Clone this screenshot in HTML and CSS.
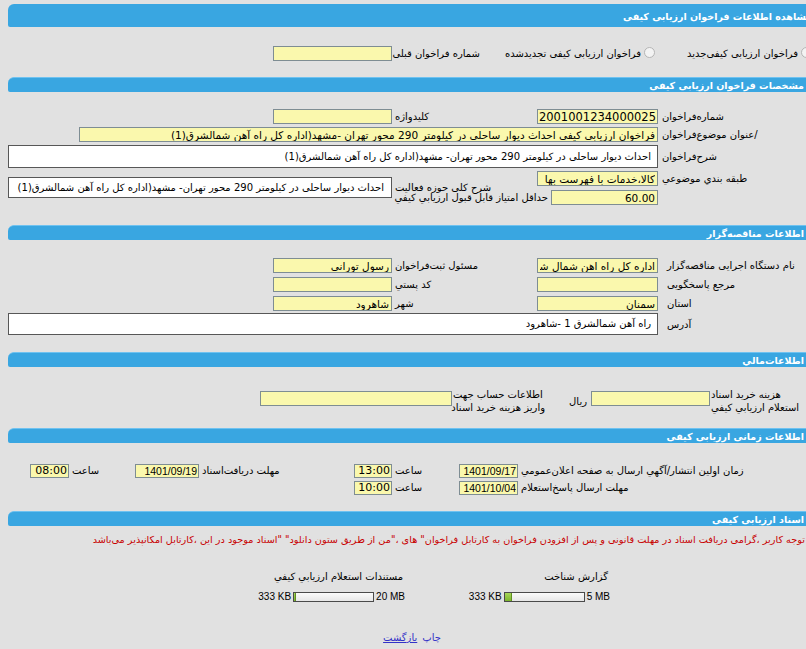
FILE: index.html
```html
<!DOCTYPE html>
<html lang="fa">
<head>
    <meta charset="UTF-8">
    <meta name="viewport" content="width=device-width, initial-scale=1.0">
    <title>مشاهده اطلاعات فراخوان ارزیابی کیفی</title>
    <link rel="stylesheet" href="styles.css">
</head>
<body>
<div class="page" dir="rtl">

    <section class="panel">
        <h2 class="panel-title main">مشاهده اطلاعات فراخوان ارزیابی کیفی</h2>
        <div class="panel-body kind-row">
            <label class="choice first"><input type="radio" name="kind"><span>فراخوان ارزیابی کیفی‌جدید</span></label>
            <label class="choice second"><input type="radio" name="kind"><span>فراخوان ارزیابی کیفی تجدیدشده</span></label>
            <span class="lbl prev-label">شماره فراخوان قبلی</span>
            <input class="field" type="text" value="">
        </div>
    </section>

    <section class="panel">
        <h2 class="panel-title">مشخصات فراخوان ارزیابی کیفی</h2>
        <div class="panel-body form-grid spec">
            <span class="lbl">شماره‌فراخوان</span>
            <input class="field num" type="text" value="2001001234000025">
            <span class="lbl side">کلیدواژه</span>
            <input class="field" type="text" value="">

            <span class="lbl">/عنوان موضوع‌فراخوان</span>
            <input class="field title-field" type="text" value="فراخوان ارزیابی کیفی احداث دیوار ساحلی در کیلومتر 290 محور تهران -مشهد(اداره کل راه آهن شمالشرق(1)">

            <span class="lbl">شرح‌فراخوان</span>
            <div class="memo full">احداث دیوار ساحلی در کیلومتر 290 محور تهران- مشهد(اداره کل راه آهن شمالشرق(1)</div>

            <span class="lbl">طبقه بندي موضوعي</span>
            <input class="field" type="text" value="کالا،خدمات با فهرست بها">
            <span class="lbl side activity-label">شرح کلی حوزه فعالیت</span>
            <div class="memo activity">احداث دیوار ساحلی در کیلومتر 290 محور تهران- مشهد(اداره کل راه آهن شمالشرق(1)</div>

            <div class="min-score">
                <input class="field short" type="text" value="60.00">
                <span class="lbl">حداقل امتیاز قابل قبول ارزیابي کیفي</span>
            </div>
        </div>
    </section>

    <section class="panel">
        <h2 class="panel-title">اطلاعات مناقصه‌گزار</h2>
        <div class="panel-body form-grid owner">
            <span class="lbl">نام دستگاه اجرایی مناقصه‌گزار</span>
            <input class="field" type="text" value="اداره کل راه اهن شمال شرق">
            <span class="lbl side">مسئول ثبت‌فراخوان</span>
            <input class="field" type="text" value="رسول تورانی">

            <span class="lbl">مرجع پاسخگویی</span>
            <input class="field" type="text" value="">
            <span class="lbl side">کد پستي</span>
            <input class="field" type="text" value="">

            <span class="lbl">استان</span>
            <input class="field" type="text" value="سمنان">
            <span class="lbl side">شهر</span>
            <input class="field" type="text" value="شاهرود">

            <span class="lbl address-label">آدرس</span>
            <div class="memo full address">راه آهن شمالشرق 1 -شاهرود</div>
        </div>
    </section>

    <section class="panel">
        <h2 class="panel-title">اطلاعات‌مالي</h2>
        <div class="panel-body money-row">
            <span class="lbl two-line fee-label">هزینه خرید اسناد<br>استعلام ارزیابي کیفي</span>
            <input class="field fee" type="text" value="">
            <span class="lbl currency">ریال</span>
            <span class="lbl two-line account-label">اطلاعات حساب جهت<br>واریز هزینه خرید اسناد</span>
            <input class="field account" type="text" value="">
        </div>
    </section>

    <section class="panel">
        <h2 class="panel-title">اطلاعات زمانی ارزیابی کیفی</h2>
        <div class="panel-body dates">
            <div class="date-row">
                <span class="lbl c-main">زمان اولین انتشار/آگهي ارسال به صفحه اعلان‌عمومي</span>
                <input class="field date" type="text" value="1401/09/17">
                <span class="lbl c-hour">ساعت</span>
                <input class="field hour" type="text" value="13:00">
                <span class="lbl c-mid">مهلت دریافت‌اسناد</span>
                <input class="field date wide" type="text" value="1401/09/19">
                <span class="lbl c-hour last">ساعت</span>
                <input class="field hour last" type="text" value="08:00">
            </div>
            <div class="date-row">
                <span class="lbl c-main">مهلت ارسال پاسخ‌استعلام</span>
                <input class="field date" type="text" value="1401/10/04">
                <span class="lbl c-hour">ساعت</span>
                <input class="field hour" type="text" value="10:00">
            </div>
        </div>
    </section>

    <section class="panel">
        <h2 class="panel-title">اسناد ارزیابی کیفی</h2>
        <div class="panel-body docs">
            <p class="notice">توجه کاربر ،گرامی دریافت اسناد در مهلت قانونی و پس از افزودن فراخوان به کارتابل فراخوان" های ،"من از طریق ستون دانلود" "اسناد موجود در این ،کارتابل امکانپذیر می‌باشد</p>

            <div class="files">
                <div class="file">
                    <span class="file-name">گزارش شناخت</span>
                    <span class="meter" dir="ltr">333 KB<span class="bar"><span class="bar-fill" style="width: 9%"></span></span>5 MB</span>
                </div>
                <div class="file">
                    <span class="file-name">مستندات استعلام ارزیابي کیفي</span>
                    <span class="meter" dir="ltr">333 KB<span class="bar"><span class="bar-fill" style="width: 3%"></span></span>20 MB</span>
                </div>
            </div>

            <div class="actions">
                <a href="#" class="print">چاپ</a>
                <a href="#" class="back">بازگشت</a>
            </div>
        </div>
    </section>

</div>
</body>
</html>
```

FILE: styles.css
```css
* {
    box-sizing: border-box;
    margin: 0;
    padding: 0;
}

body {
    background-color: #e1e1e1;
    font-family: "DejaVu Sans", Tahoma, sans-serif;
    font-size: 10px;
    color: #000;
    overflow: hidden;
}

.page {
    width: 808px;
    margin-left: 8px;
    padding-top: 4px;
}

/* section headers */
.panel-title {
    height: 15px;
    padding-right: 12px;
    background-color: #39a6e1;
    border-top: 1px solid #6fc2f0;
    border-radius: 6px 0 0 2px;
    color: #fff;
    font-size: 9.5px;
    font-weight: bold;
    line-height: 16px;
    white-space: nowrap;
}

.panel-title.main {
    height: 23px;
    padding-right: 4px;
    border-top: none;
    line-height: 26px;
}

/* common controls */
.lbl {
    white-space: nowrap;
    line-height: 15px;
}

.field {
    height: 15px;
    width: 121px;
    padding: 0 2px;
    background-color: #faf8ad;
    border: 1px solid #7e8d93;
    font-family: inherit;
    font-size: 10.5px;
    color: #000;
    text-align: right;
    outline: none;
}

.field.num {
    font-size: 11.5px;
    padding: 0 1px;
}

.memo {
    height: 23px;
    padding: 0 6px;
    background-color: #fff;
    border: 1px solid #575757;
    line-height: 21px;
    white-space: nowrap;
    overflow: hidden;
}

/* section 1 */
.kind-row {
    display: flex;
    align-items: center;
    height: 50px;
    padding-top: 3px;
}

.choice {
    display: flex;
    align-items: center;
}

.choice input {
    appearance: none;
    width: 11px;
    height: 11px;
    margin-top: -2px;
    border: 1px solid #b5b5b5;
    border-radius: 50%;
    background-color: #f3f3f3;
}

.choice span {
    margin-right: 3px;
}

.choice.first {
    width: 156px;
}

.choice.first input {
    margin-right: 4px;
}

.choice.second {
    width: 180px;
}

.choice.second input {
    margin-right: 5px;
}

.prev-label {
    width: 88px;
    padding-left: 3px;
    text-align: left;
}

.kind-row .field {
    width: 119px;
}

/* label / field grids */
.form-grid {
    display: grid;
    grid-template-columns: 158px 121px 145px 384px;
    grid-auto-rows: 15px;
    align-items: center;
}

.form-grid .lbl {
    text-align: left;
    padding-left: 4px;
}

.form-grid .lbl.side {
    padding-left: 3px;
}

.form-grid .side + .field {
    width: 119px;
}

.spec {
    height: 133px;
    padding-top: 17px;
    row-gap: 3px;
    grid-template-rows: 15px 15px 23px 15px 15px;
}

.title-field {
    grid-column: 2 / 5;
    width: 579px;
}

.memo.full {
    grid-column: 2 / 5;
}

.activity-label {
    grid-column: 3;
    grid-row: 4 / 6;
    line-height: 11px;
}

.memo.activity {
    grid-column: 4;
    grid-row: 4 / 6;
    height: 21px;
    line-height: 19px;
    padding-right: 7px;
}

.min-score {
    grid-column: 2 / 4;
    grid-row: 5;
    display: flex;
    align-items: center;
    gap: 3px;
    margin-top: 2px;
}

.min-score .lbl {
    padding-left: 0;
    line-height: 11px;
}

.field.short {
    width: 107px;
}

.owner {
    height: 112px;
    padding-top: 18px;
    row-gap: 4px;
    grid-template-rows: 15px 15px 15px 22px;
}

.owner .lbl {
    padding-left: 9px;
}

.owner .lbl.side {
    padding-left: 3px;
}

.memo.address {
    height: 22px;
    margin-top: -4px;
    line-height: 20px;
}

.owner .address-label {
    margin-top: -4px;
}

/* financial */
.money-row {
    display: flex;
    align-items: flex-start;
    height: 61px;
    padding-top: 21px;
}

.two-line {
    line-height: 13px;
    text-align: left;
}

.fee-label {
    width: 106px;
    padding-left: 1px;
}

.field.fee {
    width: 119px;
    margin-top: 3px;
}

.currency {
    width: 46px;
    padding-right: 4px;
    margin-top: 6px;
}

.account-label {
    width: 92px;
}

.field.account {
    width: 192px;
    margin-top: 3px;
    margin-right: 1px;
}

/* dates */
.dates {
    height: 68px;
    padding-top: 20px;
}

.date-row {
    display: flex;
    align-items: center;
    margin-bottom: 2px;
}

.date-row .lbl {
    text-align: left;
    padding-left: 3px;
}

.date-row .field {
    height: 14px;
}

.c-main {
    width: 298px;
}

.c-hour {
    width: 67px;
}

.c-hour.last {
    width: 66px;
}

.c-mid {
    width: 155px;
}

.field.date {
    width: 59px;
    padding: 0 1px;
    font-family: "Liberation Sans", Arial, sans-serif;
    font-size: 10.5px;
}

.field.date.wide {
    width: 64px;
}

.field.hour {
    width: 38px;
    padding: 0 1px;
    font-size: 11px;
}

.field.hour.last {
    width: 39px;
}

/* documents */
.docs {
    padding-top: 7px;
}

.notice {
    padding-right: 11px;
    color: #c80000;
    font-size: 9.7px;
    line-height: 14px;
    white-space: nowrap;
}

.files {
    display: flex;
    padding-right: 206px;
    margin-top: 23px;
}

.file {
    display: flex;
    flex-direction: column;
    align-items: flex-start;
    width: 205px;
    gap: 6px;
}

.file-name {
    padding-right: 2px;
    line-height: 14px;
}

.meter {
    display: inline-flex;
    align-items: center;
    gap: 2px;
    font-family: "Liberation Sans", Arial, sans-serif;
    font-size: 10px;
    line-height: 14px;
}

.bar {
    display: block;
    width: 81px;
    height: 10px;
    border: 1px solid #4a4a4a;
    background: linear-gradient(#fafafa, #e6e6e6);
}

.bar-fill {
    display: block;
    height: 100%;
    background: linear-gradient(#a6d65a, #7cb52e);
    border-right: 1px solid #5f8f22;
}

.actions {
    display: flex;
    justify-content: center;
    gap: 5px;
    margin-top: 27px;
    line-height: 14px;
}

.actions a {
    color: #3232c8;
    text-decoration: none;
}

.actions a.back {
    text-decoration: underline;
}
```
